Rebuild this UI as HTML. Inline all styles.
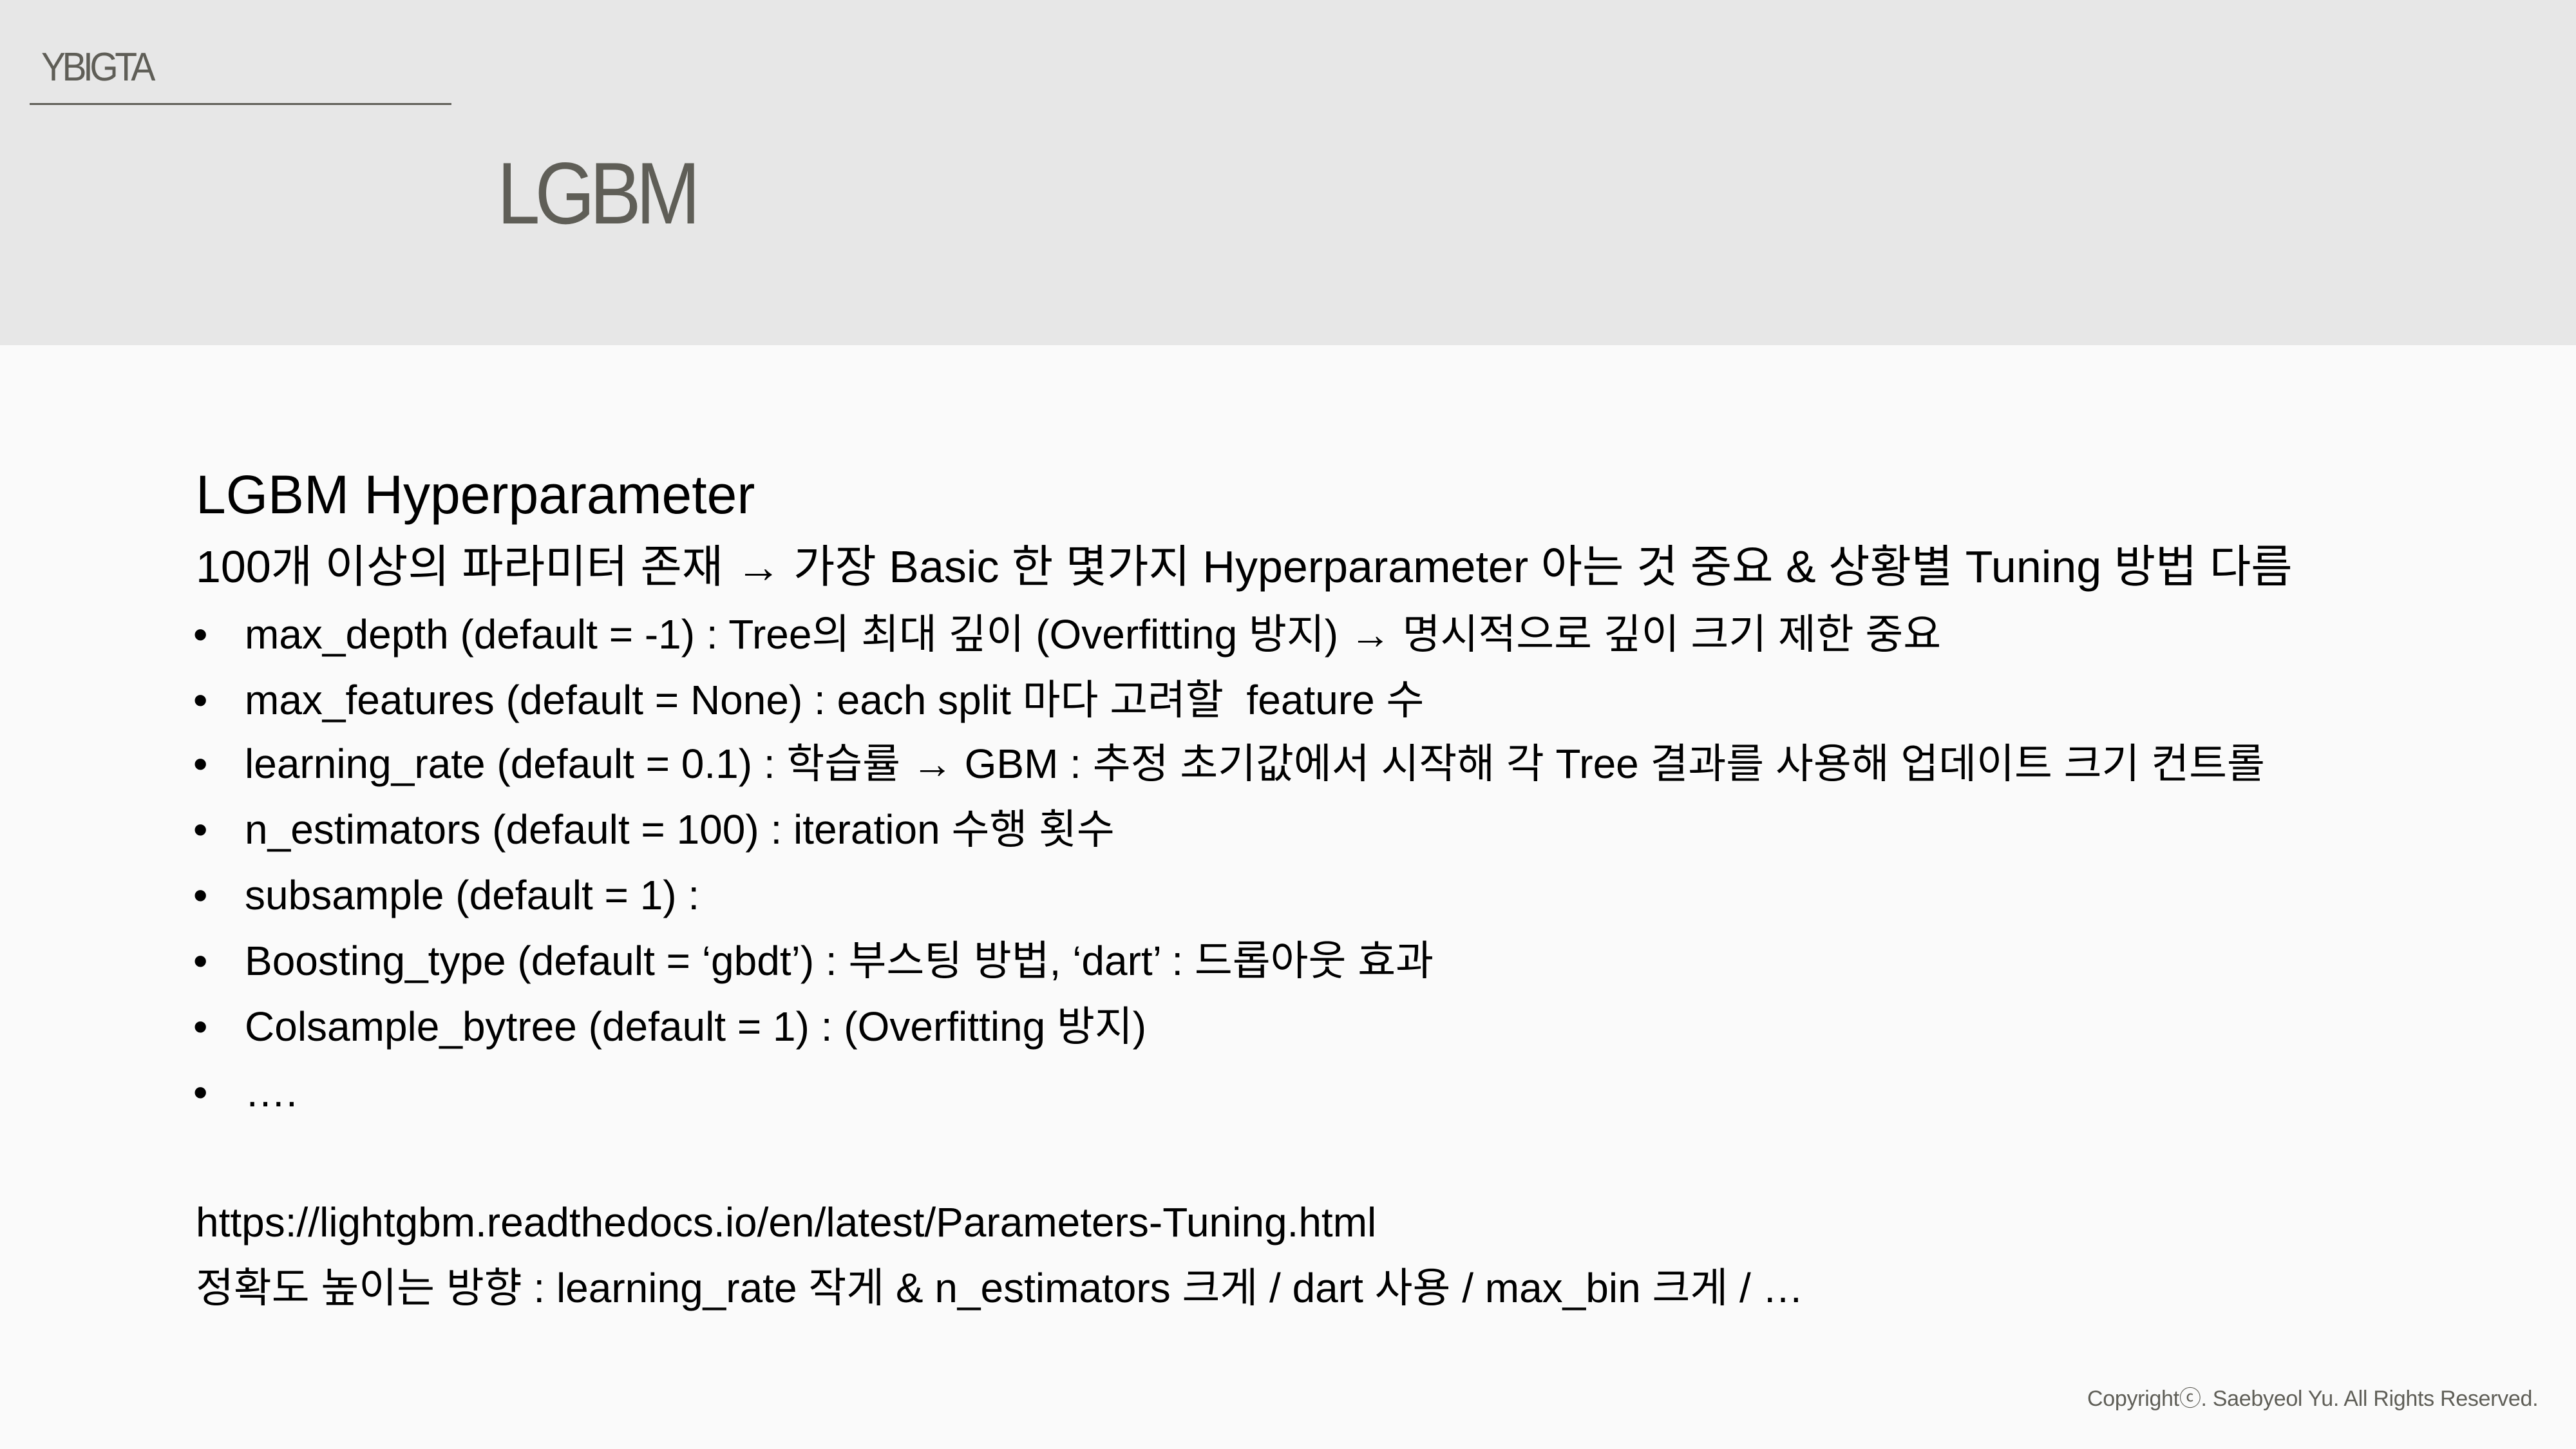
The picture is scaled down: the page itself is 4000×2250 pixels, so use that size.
<!DOCTYPE html>
<html><head><meta charset="utf-8"><style>
html,body{margin:0;padding:0}
body{width:4000px;height:2250px;background:#fafafa;position:relative;overflow:hidden;font-family:"Liberation Sans","Noto Sans CJK KR",sans-serif;color:#000}
.hdr{position:absolute;left:0;top:0;width:4000px;height:536px;background:#e7e7e7}
.t{position:absolute;white-space:nowrap;line-height:1}
.b{position:absolute;left:300px;font-size:64px;line-height:1}
</style></head><body>
<div class="hdr"></div>
<div class="t" style="left:64px;top:74px;font-size:62px;color:#5f5e57;letter-spacing:-6px;transform:scaleX(0.92);transform-origin:left">YBIGTA</div>
<div style="position:absolute;left:46px;top:160px;width:655px;height:3px;background:#5f5e57"></div>
<div class="t" style="left:772px;top:232px;font-size:136px;color:#5f5e57;letter-spacing:-9px;transform:scaleX(0.88);transform-origin:left">LGBM</div>

<div class="t" style="left:304px;top:726px;font-size:84px">LGBM Hyperparameter</div>
<div class="t" style="left:304px;top:845px;font-size:70px">100개 이상의 파라미터 존재 → 가장 Basic 한 몇가지 Hyperparameter 아는 것 중요 &amp; 상황별 Tuning 방법 다름</div>

<div class="b" style="top:953px">•</div><div class="t" style="left:380px;top:953px;font-size:64px">max_depth (default = -1) : Tree의 최대 깊이 (Overfitting 방지) → 명시적으로 깊이 크기 제한 중요</div>
<div class="b" style="top:1055px">•</div><div class="t" style="left:380px;top:1055px;font-size:64px">max_features (default = None) : each split 마다 고려할&nbsp; feature 수</div>
<div class="b" style="top:1154px">•</div><div class="t" style="left:380px;top:1154px;font-size:64px">learning_rate (default = 0.1) : 학습률 → GBM : 추정 초기값에서 시작해 각 Tree 결과를 사용해 업데이트 크기 컨트롤</div>
<div class="b" style="top:1256px">•</div><div class="t" style="left:380px;top:1256px;font-size:64px">n_estimators (default = 100) : iteration 수행 횟수</div>
<div class="b" style="top:1358px">•</div><div class="t" style="left:380px;top:1358px;font-size:64px">subsample (default = 1) :</div>
<div class="b" style="top:1460px">•</div><div class="t" style="left:380px;top:1460px;font-size:64px">Boosting_type (default = ‘gbdt’) : 부스팅 방법, ‘dart’ : 드롭아웃 효과</div>
<div class="b" style="top:1562px">•</div><div class="t" style="left:380px;top:1562px;font-size:64px">Colsample_bytree (default = 1) : (Overfitting 방지)</div>
<div class="b" style="top:1664px">•</div><div class="t" style="left:380px;top:1664px;font-size:64px">….</div>

<div class="t" style="left:304px;top:1866px;font-size:64px">https://lightgbm.readthedocs.io/en/latest/Parameters-Tuning.html</div>
<div class="t" style="left:304px;top:1968px;font-size:64px">정확도 높이는 방향 : learning_rate 작게 &amp; n_estimators 크게 / dart 사용 / max_bin 크게 / …</div>

<div class="t" style="left:3241px;top:2155px;font-size:34px;color:#5f5e57;letter-spacing:-0.3px">Copyrightⓒ. Saebyeol Yu. All Rights Reserved.</div>
</body></html>
